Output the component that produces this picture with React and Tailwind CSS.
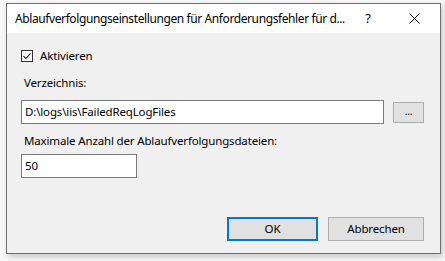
export default function App() {
  return (
    <div
      className="w-[445px] h-[261px] bg-[#f7f7f7] pt-[3px] pl-[6px] text-black"
      style={{ fontFamily: '"Noto Sans", "Open Sans", sans-serif' }}
    >
      <div className="w-[435px] h-[251px] border border-[#6f6f6f] bg-[#f0f0f0] flex flex-col shadow-[2px_3px_6px_rgba(0,0,0,0.18)]">
        {/* title bar */}
        <div className="h-[29px] bg-white flex items-center text-[12px] pl-[8px]">
          <span className="flex-1 min-w-0 overflow-hidden whitespace-nowrap tracking-[-0.4px]">
            Ablaufverfolgungseinstellungen für Anforderungsfehler für d...
          </span>
          <span className="w-[40px] shrink-0 text-center text-[13px]">?</span>
          <span className="w-[52px] shrink-0 flex justify-center">
            <svg width="11" height="11" viewBox="0 0 11 11">
              <path d="M0.5 0.5L10.5 10.5M10.5 0.5L0.5 10.5" stroke="#000" strokeWidth="1" />
            </svg>
          </span>
        </div>

        {/* body */}
        <div className="flex-1 flex flex-col pl-[14px] pr-[16px] text-[11.5px] tracking-[-0.15px]">
          <label className="flex items-center mt-[17px] h-[12px]">
            <span className="w-[12px] h-[12px] border border-[#333] bg-white flex items-center justify-center">
              <svg width="10" height="10" viewBox="0 0 10 10">
                <path d="M1.5 5.2L3.8 7.5L8.6 2.3" fill="none" stroke="#222" strokeWidth="1.1" />
              </svg>
            </span>
            <span className="ml-[7px]">Aktivieren</span>
          </label>

          <div className="mt-[13px] ml-[3px] leading-[16px]">Verzeichnis:</div>
          <div className="flex items-center mt-[9px]">
            <div className="w-[363px] h-[24px] border border-[#7a7a7a] bg-white flex items-center pl-[3px]">
              D:\logs\iis\FailedReqLogFiles
            </div>
            <div className="ml-[9px] w-[31px] h-[21px] border border-[#adadad] bg-[#e1e1e1] flex items-center justify-center text-[10px] leading-none pb-[3px]">
              ...
            </div>
          </div>

          <div className="mt-[9px] ml-[3px] leading-[16px]">Maximale Anzahl der Ablaufverfolgungsdateien:</div>
          <div className="mt-[5px] w-[116px] h-[24px] border border-[#7a7a7a] bg-white flex items-center pl-[3px]">
            50
          </div>

          <div className="mt-[39px] flex justify-end gap-[10px]">
            <div className="w-[91px] h-[24px] border-2 border-[#0078d7] bg-[#e1e1e1] flex items-center justify-center">
              OK
            </div>
            <div className="w-[96px] h-[24px] border border-[#adadad] bg-[#e1e1e1] flex items-center justify-center">
              Abbrechen
            </div>
          </div>
        </div>
      </div>
    </div>
  );
}
